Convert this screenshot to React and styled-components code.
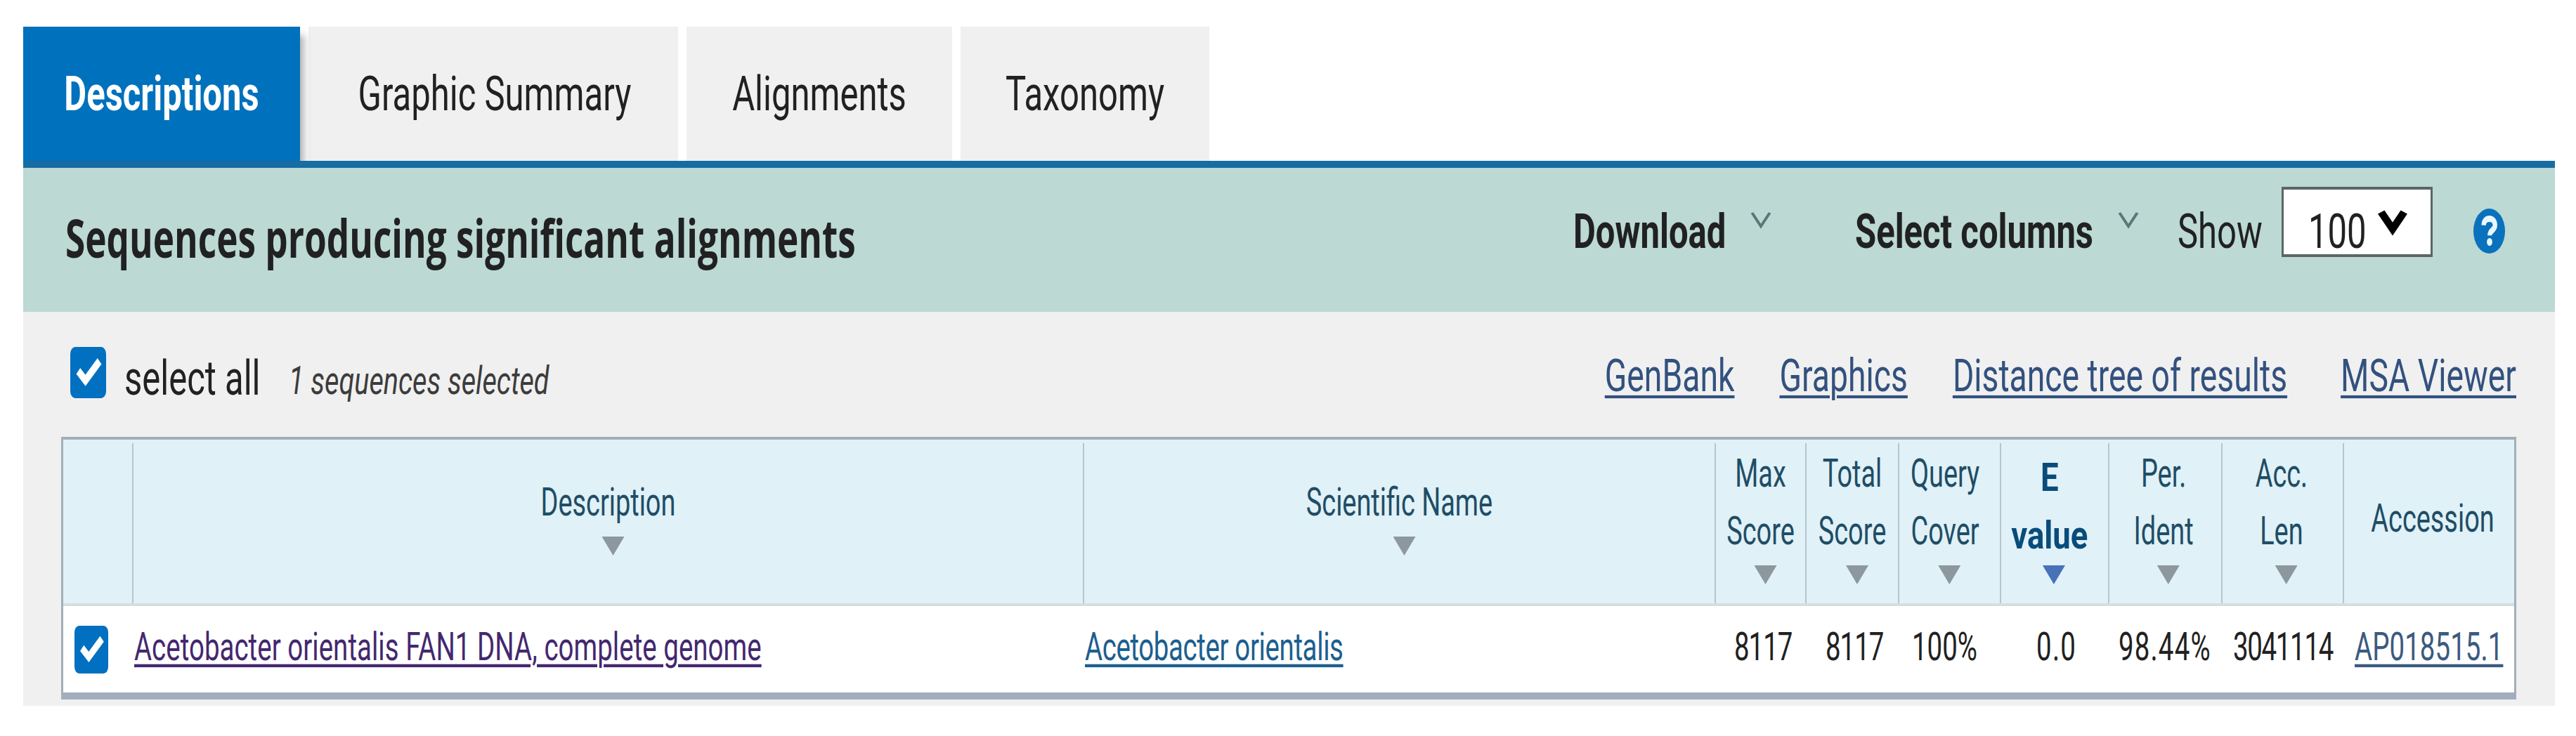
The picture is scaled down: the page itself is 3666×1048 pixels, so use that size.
import React, { useState } from "react";
import styled, { createGlobalStyle } from "styled-components";

const columns = [
  { lines: ["Description"], top: 49 },
  { lines: ["Scientific Name"], top: 49 },
  { lines: ["Max", "Score"], top: 8 },
  { lines: ["Total", "Score"], top: 8 },
  { lines: ["Query", "Cover"], top: 8, shift: -8 },
  { lines: ["E", "value"], top: 13, active: true, shift: -9 },
  { lines: ["Per.", "Ident"], top: 8, shift: -3 },
  { lines: ["Acc.", "Len"], top: 8, shift: -2 },
  { lines: ["Accession"], top: 72, unsortable: true, shift: 5 },
];

const CheckBox = ({ w, h, checked, onClick }) => (
  <CheckSvg width={w} height={h} viewBox="0 0 13 13" preserveAspectRatio="none" onClick={onClick}>
    <rect width="13" height="13" rx="1.8" fill={checked ? "#0170c0" : "#fff"} />
    {checked && <path d="M2.9 6.1 L5.5 8.5 L10.6 3.6" fill="none" stroke="#fff" strokeWidth="2.1" />}
  </CheckSvg>
);

const Chevron = ({ w = 30, h = 24, bold }) => (
  <svg width={w} height={h} viewBox="0 0 10 10" preserveAspectRatio="none">
    {bold ? (
      <path d="M1.3 1 L5 7 L8.7 1" fill="none" stroke="#000" strokeWidth="2.5" />
    ) : (
      <path d="M0.8 0.4 L5 8.4 L9.2 0.4" fill="none" stroke="#5c7776" strokeWidth="1.4" />
    )}
  </svg>
);

const HelpIcon = () => (
  <svg width="45" height="64" viewBox="0 0 512 512" preserveAspectRatio="none">
    <circle cx="256" cy="256" r="256" fill="#0a71bd" />
    <path
      d="M166 190 C168 142 206 116 260 116 C312 116 350 146 350 190 C350 248 264 244 264 306"
      fill="none"
      stroke="#e8f8ff"
      strokeWidth="72"
    />
    <circle cx="262" cy="380" r="44" fill="#e8f8ff" />
  </svg>
);

function App() {
  const [selected, setSelected] = useState(true);

  const handleSelect = () => {
    setSelected(!selected);
  };

  return (
    <Page>
      <GlobalStyle />
      <Tabs>
        <Tab $w={394} $active>
          <Text $bold>Descriptions</Text>
        </Tab>
        <Tab $w={526} $indent={4}>
          <Text>Graphic Summary</Text>
        </Tab>
        <Tab $w={378}>
          <Text>Alignments</Text>
        </Tab>
        <Tab $w={354}>
          <Text>Taxonomy</Text>
        </Tab>
      </Tabs>

      <Banner>
        <Title>
          <TitleText>Sequences producing significant alignments</TitleText>
        </Title>
        <Controls>
          <Menu $w={401}>
            <Text $bold>Download</Text>
            <Caret>
              <Chevron />
            </Caret>
          </Menu>
          <Menu $w={459}>
            <Text $bold>Select columns</Text>
            <Caret>
              <Chevron />
            </Caret>
          </Menu>
          <ShowLabel>
            <Text>Show</Text>
          </ShowLabel>
          <PageSize>
            <Text>100</Text>
            <Chevron w={44} h={40} bold />
          </PageSize>
          <HelpIcon />
        </Controls>
      </Banner>

      <Panel>
        <Toolbar>
          <CheckBox w={51} h={73} checked={selected} onClick={handleSelect} />
          <SelectAll>
            <Text>select all</Text>
          </SelectAll>
          <Count>
            <Text $size={39.6} $italic $color="#3c3c3c">
              1 sequences selected
            </Text>
          </Count>
          <Links>
            <ToolLink href="#">GenBank</ToolLink>
            <ToolLink href="#">Graphics</ToolLink>
            <ToolLink href="#">Distance tree of results</ToolLink>
            <ToolLink href="#">MSA Viewer</ToolLink>
          </Links>
        </Toolbar>

        <Table>
          <HeadRow>
            <HeadCell />
            {columns.map((col, i) => (
              <HeadCell key={i} $top={col.top} $last={col.unsortable}>
                {col.lines.map((line) => (
                  <HeadLine key={line} $shift={col.shift}>
                    <HeadText $active={col.active}>{line}</HeadText>
                  </HeadLine>
                ))}
                {!col.unsortable && <SortArrow $active={col.active} $shift={col.shift} />}
              </HeadCell>
            ))}
          </HeadRow>
          <Row>
            <CheckCell>
              <CheckBox w={48} h={68} checked={selected} onClick={handleSelect} />
            </CheckCell>
            <Cell $left={1}>
              <RowLink href="#" $color="#43286f" $spacing={0.06}>
                Acetobacter orientalis FAN1 DNA, complete genome
              </RowLink>
            </Cell>
            <Cell $left={1}>
              <RowLink href="#" $color="#1c5f90" $spacing={-0.35}>
                Acetobacter orientalis
              </RowLink>
            </Cell>
            <Cell $left={26}>
              <CellText $spacing={-1}>8117</CellText>
            </Cell>
            <Cell $left={27}>
              <CellText $spacing={-1}>8117</CellText>
            </Cell>
            <Cell $left={18}>
              <CellText>100%</CellText>
            </Cell>
            <Cell $left={50}>
              <CellText $spacing={1.3}>0.0</CellText>
            </Cell>
            <Cell $left={13}>
              <CellText $spacing={1.2}>98.44%</CellText>
            </Cell>
            <Cell $left={15}>
              <CellText $spacing={-1.3}>3041114</CellText>
            </Cell>
            <Cell $left={15}>
              <RowLink href="#" $color="#3c5a80" $spacing={0.1}>
                AP018515.1
              </RowLink>
            </Cell>
          </Row>
        </Table>
      </Panel>
    </Page>
  );
}

export default App;

const GlobalStyle = createGlobalStyle`
  body{
    margin:0;
    background-color:white;
    font-family:Roboto, sans-serif;
  }
  *{
    box-sizing:border-box;
  }
`;

const Page = styled.div`
  width:3666px;
  height:1048px;
  padding:38px 30px 0 33px;
  overflow:hidden;
`;

const Tabs = styled.div`
  display:flex;
  gap:12px;
  height:201px;
  border-bottom:10px solid #176ca3;
`;

const Tab = styled.div`
  display:flex;
  align-items:center;
  justify-content:center;
  width:${props=> props.$w}px;
  height:191px;
  padding-bottom:1px;
  padding-left:${props=> props.$indent || 0}px;
  color:${props=> props.$active ? "white":"#212121"};
  background-color:${props=> props.$active ? "#0071bc":"#f0f0f0"};
  box-shadow:${props=> props.$active ? "8px 10px 10px -2px rgba(0,0,0,0.3)":"none"};
  z-index:${props=> props.$active ? 1:0};
  clip-path:${props=> props.$active ? "inset(0 -20px 0 0)":"none"};
`;

/* condensed lettering: the size sets the width, the vertical scale the height */
const Text = styled.span`
  display:inline-block;
  font-size:${props=> props.$size || 49}px;
  font-weight:${props=> props.$bold ? 700:400};
  font-style:${props=> props.$italic ? "italic":"normal"};
  color:${props=> props.$color || "inherit"};
  line-height:1;
  white-space:nowrap;
  transform:scaleY(1.41);
`;

const Banner = styled.div`
  display:flex;
  justify-content:space-between;
  height:205px;
  padding:0 71px 0 60px;
  color:#212121;
  background-color:#bcd9d4;
`;

const Title = styled.div`
  display:flex;
  align-items:center;
  height:199px;
`;

const TitleText = styled(Text)`
  font-family:"Open Sans", sans-serif;
  font-size:51.3px;
  font-weight:700;
  transform:scaleY(1.48);
`;

const Controls = styled.div`
  display:flex;
  align-items:center;
  height:180px;
`;

const Menu = styled.div`
  display:flex;
  align-items:center;
  gap:35px;
  width:${props=> props.$w}px;
`;

const Caret = styled.span`
  display:flex;
  margin-top:-30px;
`;

const ShowLabel = styled.div`
  width:148px;
`;

const PageSize = styled.div`
  display:flex;
  align-items:center;
  gap:15px;
  width:215px;
  height:100px;
  margin:-26px 58px 0 0;
  padding:26px 0 0 35px;
  background-color:white;
  border:solid #5c6666;
  border-width:4px 3px;

  svg{
    margin-top:-22px;
  }
`;

const Panel = styled.div`
  height:561px;
  padding:0 55px 0 54px;
  background-color:#f0f0f0;
`;

const Toolbar = styled.div`
  display:flex;
  align-items:center;
  height:178px;
  padding-left:13px;
  color:#212121;
`;

const CheckSvg = styled.svg`
  flex:none;
  margin-top:-5px;
`;

const SelectAll = styled.div`
  width:234px;
  margin:11px 0 0 26px;
`;

const Count = styled.div`
  margin-top:20px;
`;

const Links = styled.div`
  display:flex;
  gap:64px;
  margin:4px 0 0 auto;
`;

const ToolLink = styled.a`
  font-size:46.3px;
  line-height:1;
  color:#32517f;
  white-space:nowrap;
  text-decoration:underline;
  text-decoration-thickness:3.3px;
  text-underline-offset:4px;
  transform:scaleY(1.4);

  &:last-child{
    margin-left:12px;
  }
`;

const Table = styled.div`
  width:3494px;
  height:374px;
  background-color:white;
  border:3px solid #a1afb8;
  border-top:4px solid #a1afb5;
  border-bottom:10px solid #a2aebd;
`;

const HeadRow = styled.div`
  display:grid;
  grid-template-columns:100px 1353px 899px 129px 132px 145px 154px 161px 173px 242px;
  height:237px;
  background-color:#e0f1f8;
  border-bottom:4px solid #d4dee1;
`;

const HeadCell = styled.div`
  display:flex;
  flex-direction:column;
  align-items:center;
  margin-top:5px;
  padding-top:${props=> (props.$top || 5) - 5}px;
  border-right:${props=> props.$last ? "none":"2px solid #b6c6cc"};
`;

const HeadLine = styled.div`
  display:flex;
  align-items:center;
  height:82px;
  padding-right:${props=> props.$shift < 0 ? -props.$shift * 1.6:0}px;
  padding-left:${props=> props.$shift > 0 ? props.$shift * 2:0}px;
`;

const HeadText = styled.span`
  font-size:${props=> props.$active ? 45.5:37.9}px;
  font-weight:${props=> props.$active ? 700:400};
  line-height:1;
  color:${props=> props.$active ? "#084c7a":"#204d65"};
  white-space:nowrap;
  transform:scaleY(${props=> props.$active ? 1.24:1.48});
`;

const SortArrow = styled.div`
  width:32px;
  height:27px;
  margin-top:${props=> props.$active ? 2:7}px;
  margin-left:${props=> 14 + (props.$shift || 0) * 1.8}px;
  background-color:${props=> props.$active ? "#4772b8":"#8d979e"};
  clip-path:polygon(0 0, 100% 0, 50% 100%);
`;

const Row = styled.div`
  display:grid;
  grid-template-columns:100px 1353px 899px 129px 132px 145px 154px 161px 173px 242px;
  height:123px;
`;

const CheckCell = styled.div`
  display:flex;
  align-items:center;
  padding:5px 0 0 16px;
`;

const Cell = styled.div`
  display:flex;
  align-items:center;
  padding:0 0 7px ${props=> props.$left}px;
`;

const CellText = styled.span`
  font-size:38.4px;
  line-height:1;
  letter-spacing:${props=> props.$spacing || 0}px;
  color:#212121;
  transform:scaleY(1.46);
`;

const RowLink = styled.a`
  font-size:38.4px;
  line-height:1;
  letter-spacing:${props=> props.$spacing || 0}px;
  color:${props=> props.$color};
  white-space:nowrap;
  text-decoration:underline;
  text-decoration-thickness:3px;
  text-underline-offset:4px;
  transform:scaleY(1.46);
`;
